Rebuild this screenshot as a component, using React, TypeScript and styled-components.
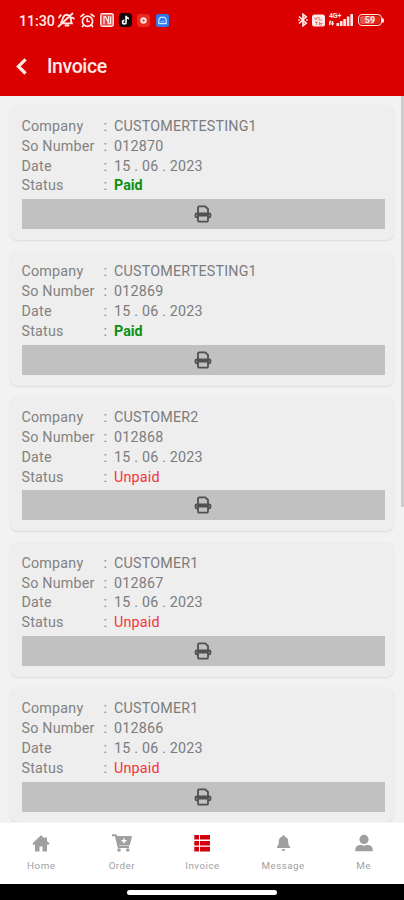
import React from "react";
import styled, { createGlobalStyle } from "styled-components";

const GlobalStyle = createGlobalStyle`
  * { box-sizing: border-box; }
  html, body { margin: 0; padding: 0; overflow: hidden; }
  body { font-family: Roboto, "Liberation Sans", sans-serif; background: #f1f1f1; }
`;

const Screen = styled.div`
  width: 404px;
  height: 900px;
  display: flex;
  flex-direction: column;
  overflow: hidden;
  background: #f1f1f1;
`;

const Header = styled.header`
  flex: 0 0 96px;
  background: #da0000;
  color: #ffe9e6;
`;

const StatusBar = styled.div`
  height: 40px;
  padding: 0 20px 0 19px;
  display: flex;
  align-items: center;
  justify-content: space-between;
`;

const StatusGroup = styled.div<{ $gap: number }>`
  display: flex;
  align-items: center;
  gap: ${(p) => p.$gap}px;
  svg { display: block; }
`;

const Clock = styled.span`
  width: 35px;
  margin-right: -2px;
  font-size: 14.3px;
  font-weight: 500;
  letter-spacing: -0.1px;
  line-height: 16px;
  padding-top: 1px;
`;

const TitleBar = styled.div`
  height: 52px;
  padding-left: 16px;
  display: flex;
  align-items: center;
  gap: 20px;
`;

const Title = styled.h1`
  margin: 0;
  padding-top: 1px;
  font-size: 19.5px;
  line-height: 24px;
  font-weight: 500;
  letter-spacing: -0.4px;
`;

const Body = styled.div`
  flex: 1;
  min-height: 0;
  display: flex;
  background: #f2f2f2;
`;

const List = styled.main`
  flex: 1;
  min-width: 0;
  overflow: hidden;
  padding: 9px 7px 0 10px;
  display: flex;
  flex-direction: column;
  gap: 10.6px;
`;

const ScrollThumb = styled.div`
  flex: 0 0 3px;
  height: 411px;
  background: #cdcdcd;
`;

const Card = styled.article`
  flex: 0 0 135px;
  padding: 10.9px 9.5px 0 11.5px;
  border-radius: 8px;
  background: #eeeeee;
  box-shadow: 0 1px 2px rgba(0, 0, 0, 0.1);
`;

const Row = styled.div`
  display: grid;
  grid-template-columns: 82px 10.5px 1fr;
  height: 19.85px;
  font-size: 14.3px;
  line-height: 20px;
  letter-spacing: 0.2px;
  color: #828282;
`;

const Value = styled.span<{ $tone?: "paid" | "unpaid" }>`
  color: ${(p) => (p.$tone === "paid" ? "#0b910f" : p.$tone === "unpaid" ? "#f73338" : "#7c7c7c")};
  font-weight: ${(p) => (p.$tone === "paid" ? 700 : 400)};
  letter-spacing: ${(p) => (p.$tone === "paid" ? 0 : 0.2)}px;
`;

const PrintButton = styled.button`
  display: flex;
  align-items: center;
  justify-content: center;
  width: 100%;
  height: 30px;
  margin-top: 4px;
  padding: 0;
  border: 0;
  background: #c1c1c1;
`;

const Nav = styled.nav`
  flex: 0 0 62px;
  background: #fff;
  border-top: 1px solid #f6f6f6;
  padding-left: 1px;
  display: grid;
  grid-template-columns: repeat(5, 1fr);
`;

const NavItem = styled.div<{ $active?: boolean }>`
  display: flex;
  flex-direction: column;
  align-items: center;
  padding-top: 11px;
  gap: 7px;
  color: ${(p) => (p.$active ? "#d4000c" : "#9f9f9f")};
  svg { display: block; }
`;

const NavLabel = styled.span`
  font-size: 9.8px;
  line-height: 12px;
  letter-spacing: 0.5px;
  color: #a0a0a0;
`;

const SystemBar = styled.div`
  flex: 0 0 16px;
  background: #000;
  display: flex;
  justify-content: center;
  padding-top: 6px;
`;

const HomeHandle = styled.div`
  width: 150px;
  height: 5px;
  border-radius: 3px;
  background: #fff;
`;

const MutedBell = () => (
  <svg width="18" height="16" viewBox="0 0 18 16" fill="none" stroke="currentColor" strokeWidth="1.8" strokeLinecap="round">
    <path d="M4 10.5C6 9 5 5.5 7.4 3.7 9 2.5 11.2 2.6 12.6 4c1.6 1.7.9 4.6 2.2 7.3H6.5M8.5 13.5h3M15.5 1.5l-14 13M2 5.5l1.8-2.4M14.8 5.5l2 1" />
  </svg>
);
const Alarm = () => (
  <svg width="15" height="15" viewBox="0 0 15 15" fill="none" stroke="currentColor" strokeWidth="1.7" strokeLinecap="round">
    <circle cx="7.5" cy="8.2" r="5.1" />
    <path d="M1 3.4 3.8 1.3M14 3.4l-2.8-2.1M7.2 5.8v2.7h2M3.7 12l-1.2 1.5M11.3 12l1.2 1.5" />
  </svg>
);
const Nfc = () => (
  <svg width="14" height="14" viewBox="0 0 14 14" fill="none" stroke="currentColor">
    <rect x=".8" y=".8" width="12.4" height="12.4" rx="1.6" strokeWidth="1.5" fill="#e54640" />
    <path d="M4 11.3V3.6h1.4l3.2 6V3M10.7 3.2v7.5H7.5" strokeWidth="1.3" />
  </svg>
);
const NoteApp = () => (
  <svg width="13" height="14" viewBox="0 0 12 13">
    <rect width="12" height="13" rx="3.5" fill="#16070b" />
    <path d="M6.5 2.5v6a1.6 1.6 0 1 1-1.6-1.6M6.5 2.7c.3 1.6 1.2 2.4 2.8 2.5" fill="none" stroke="#fff" strokeWidth="1.5" />
    <path d="M5.6 5.8v3" stroke="#38c8d5" strokeWidth=".5" />
  </svg>
);
const RecorderApp = () => (
  <svg width="13" height="13" viewBox="0 0 13 13">
    <rect width="13" height="13" rx="3" fill="#e82a20" />
    <circle cx="6.5" cy="6.5" r="3.2" fill="#ffe4df" />
    <path d="m5.7 5 2.4 1.5L5.7 8Z" fill="#e42b21" />
  </svg>
);
const CloudApp = () => (
  <svg width="13" height="13" viewBox="0 0 13 13">
    <rect width="13" height="13" rx="2" fill="#2e78ef" />
    <path d="M2.8 9.6V5.4L4.5 3.4h4l1.7 2v4.2Z" fill="none" stroke="#d4e5ff" strokeWidth="1.2" />
    <path d="M4.2 8.4c0-1.3 1-1.6 1.4-1.4.5-1.2 2-1 2.2.1 1 0 1.3.8 1 1.3Z" fill="#6ea6ff" />
  </svg>
);
const CloudSlot = styled.div`
  margin-left: 1px;
`;
const Bluetooth = () => (
  <svg width="10" height="14" viewBox="0 0 10 14" fill="none" stroke="currentColor" strokeWidth="1.7">
    <path d="m1 3.5 7.2 6.7L5 12.7V1.3l3.2 2.5L1 10.5" />
    <path d="M.2 7h1.6M8.2 7h1.6" />
  </svg>
);
const VolteBadge = () => (
  <svg width="13" height="13" viewBox="0 0 13 13">
    <rect y=".5" width="13" height="12" rx="2.5" fill="currentColor" />
    <path d="m2.5 3 1.5 3 1.5-3M7 3v3h3M3 8h3M4.5 8v3M7.5 8v3H10M8 9.5h2.5" fill="none" stroke="#e6564f" strokeWidth=".8" />
  </svg>
);
const NetworkText = styled.span`
  display: block;
  height: 6px;
  font-size: 7px;
  line-height: 6px;
  font-weight: 700;
  letter-spacing: -0.2px;
`;
const NetworkStack = styled.div`
  width: 25px;
  height: 14px;
`;
const SignalBars = styled.svg`
  margin-top: -6px;
`;
const Network = () => (
  <NetworkStack>
    <NetworkText>4G+</NetworkText>
    <SignalBars width="25" height="14" viewBox="0 0 25 14" fill="currentColor">
      <path d="M0 12h1.5V9.5H3L1.2 7-.2 9.5M3 8v2.3H1.8L3.5 13l1.8-2.7H4.3V8ZM7.5 10h2.6v3H7.5ZM10.9 8h2.6v5h-2.6ZM14.3 6h2.6v7h-2.6ZM17.8 3.5h2.6V13h-2.6ZM21.4 1H24v12h-2.6Z" />
    </SignalBars>
  </NetworkStack>
);
const BatteryShell = styled.div`
  width: 24px;
  height: 12px;
  border: 1.8px solid currentColor;
  border-radius: 4px;
  display: flex;
  align-items: center;
  justify-content: center;
  font-size: 9px;
  font-weight: 700;
  line-height: 8px;
  background: linear-gradient(90deg, #e6564f 0 70%, #df2720 70%);
  background-clip: content-box;
  padding: 1px;
`;
const BatteryTip = styled.i`
  width: 2px;
  height: 5px;
  background: currentColor;
  border-radius: 0 2px 2px 0;
`;

const BackChevron = () => (
  <svg width="11" height="17" viewBox="0 0 11 17" fill="none" stroke="currentColor" strokeWidth="3.2">
    <path d="m9.6 1.3-7.2 7.1 7.2 7.1" />
  </svg>
);

const Printer = () => (
  <svg width="18" height="18" viewBox="0 0 18 18" fill="none" stroke="#505050" strokeWidth="1.8" strokeLinejoin="round">
    <path d="M4 8V2.6C4 1.8 4.5 1.3 5.3 1.3h6L14 4v4" />
    <path d="M4 12.4H2.9c-.9 0-1.4-.5-1.4-1.3V9.6c0-.8.6-1.3 1.4-1.3h12.2c.8 0 1.4.5 1.4 1.3v1.5c0 .8-.5 1.3-1.4 1.3H14" />
    <path d="M4 10.6h10v4.8c0 .8-.5 1.3-1.3 1.3H5.3c-.8 0-1.3-.5-1.3-1.3Z" />
    <path d="M2.5 9.6h13" strokeWidth="1.4" />
  </svg>
);

const HomeIcon = () => (
  <svg width="18" height="19" viewBox="0 0 18 19" fill="currentColor">
    <path d="M9 1.2.4 9.5l1 1.2H3v6.8h4.5v-5h3v5H15v-6.8h1.6l1-1.2-2.6-2.4V3.4h-2.4v1.2Z" />
  </svg>
);
const CartIcon = () => (
  <svg width="20" height="19" viewBox="0 0 20 19" fill="none" stroke="currentColor">
    <path d="M0 1.2h3.7L6.6 13H17" strokeWidth="1.9" />
    <path d="M4.5 2.6h15L17.3 11H7.1Z" fill="currentColor" />
    <circle cx="7" cy="16" r="1.8" fill="currentColor" stroke="none" />
    <circle cx="15.8" cy="16" r="1.8" fill="currentColor" stroke="none" />
    <path d="M12 4.3v5M9.5 6.8h5" stroke="#fff" strokeWidth="1.5" />
  </svg>
);
const ListIcon = () => (
  <svg width="16" height="19" viewBox="0 0 16 19" fill="currentColor">
    <path d="M.3 1H5v4.6H.3ZM6 1h10v4.6H6ZM.3 6.9H5v4.6H.3ZM6 6.9h10v4.6H6ZM.3 12.8H5v4.6H.3ZM6 12.8h10v4.6H6Z" />
  </svg>
);
const BellIcon = () => (
  <svg width="15" height="19" viewBox="0 0 16 20" fill="currentColor">
    <path d="M8 1.2c-.8 0-1.2.5-1.2 1.3C4.2 3.1 3 5.2 3 7.7c0 3.2-.7 4.6-2 5.8v1.4h14v-1.4c-1.3-1.2-2-2.6-2-5.8 0-2.5-1.2-4.6-3.8-5.2C9.2 1.7 8.8 1.2 8 1.2ZM6 16h4c-.2 1.4-.9 2.1-2 2.1s-1.8-.7-2-2.1Z" />
  </svg>
);
const PersonIcon = () => (
  <svg width="18" height="19" viewBox="0 0 18 19" fill="currentColor">
    <circle cx="9" cy="5.4" r="4.6" />
    <path d="M.3 17.3v-2c0-2.8 2-3.9 5.5-4.5 1.7 1.1 4.7 1.1 6.4 0 3.5.6 5.5 1.7 5.5 4.5v2Z" />
  </svg>
);

const invoices = [
  { company: "CUSTOMERTESTING1", number: "012870", paid: true },
  { company: "CUSTOMERTESTING1", number: "012869", paid: true },
  { company: "CUSTOMER2", number: "012868", paid: false },
  { company: "CUSTOMER1", number: "012867", paid: false },
  { company: "CUSTOMER1", number: "012866", paid: false },
];

const tabs = [
  { label: "Home", Icon: HomeIcon },
  { label: "Order", Icon: CartIcon },
  { label: "Invoice", Icon: ListIcon, active: true },
  { label: "Message", Icon: BellIcon },
  { label: "Me", Icon: PersonIcon },
];

export default function App() {
  return (
    <Screen>
      <GlobalStyle />
      <Header>
        <StatusBar>
          <StatusGroup $gap={5}>
            <Clock>11:30</Clock>
            <MutedBell />
            <Alarm />
            <Nfc />
            <NoteApp />
            <RecorderApp />
            <CloudSlot><CloudApp /></CloudSlot>
          </StatusGroup>
          <StatusGroup $gap={4}>
            <Bluetooth />
            <VolteBadge />
            <Network />
            <StatusGroup $gap={0}>
              <BatteryShell>59</BatteryShell>
              <BatteryTip />
            </StatusGroup>
          </StatusGroup>
        </StatusBar>
        <TitleBar>
          <BackChevron />
          <Title>Invoice</Title>
        </TitleBar>
      </Header>
      <Body>
        <List>
          {invoices.map((invoice) => (
            <Card key={invoice.number}>
              <Row><span>Company</span><span>:</span><Value>{invoice.company}</Value></Row>
              <Row><span>So Number</span><span>:</span><Value>{invoice.number}</Value></Row>
              <Row><span>Date</span><span>:</span><Value>15 . 06 . 2023</Value></Row>
              <Row>
                <span>Status</span><span>:</span>
                <Value $tone={invoice.paid ? "paid" : "unpaid"}>{invoice.paid ? "Paid" : "Unpaid"}</Value>
              </Row>
              <PrintButton aria-label="Print invoice"><Printer /></PrintButton>
            </Card>
          ))}
        </List>
        <ScrollThumb />
      </Body>
      <Nav>
        {tabs.map(({ label, Icon, active }) => (
          <NavItem key={label} $active={active}>
            <Icon />
            <NavLabel>{label}</NavLabel>
          </NavItem>
        ))}
      </Nav>
      <SystemBar><HomeHandle /></SystemBar>
    </Screen>
  );
}
